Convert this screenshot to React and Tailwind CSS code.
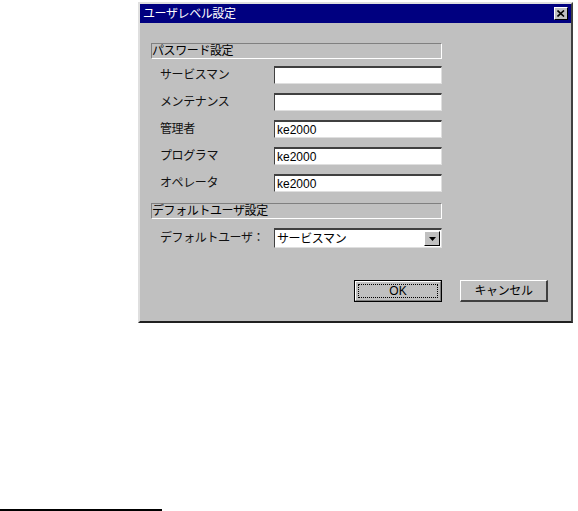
import React from "react";

const FONT = "font-['Liberation_Sans','Noto_Sans_CJK_JP',sans-serif]";

/* ---------- Sunken group header ---------- */
const GroupHeader = ({ children }) => (
  <div
    className="ml-[11px] w-[291px] h-[16px] flex items-center
    border-t border-l border-t-[#808080] border-l-[#808080]
    border-b border-r border-b-white border-r-white
    text-[12px] leading-none text-black tracking-[-0.4px]"
  >
    {children}
  </div>
);

/* ---------- Sunken text field ---------- */
const Field = ({ value = "" }) => (
  <div
    className="w-[168px] h-[18px] bg-white flex items-center
    border-t-2 border-l border-t-[#404040] border-l-[#404040]
    border-b border-r border-b-[#dfdfdf] border-r-[#dfdfdf]
    pl-[2px] text-[12px] leading-none text-black"
  >
    {value}
  </div>
);

const Row = ({ label, value }) => (
  <div className="flex items-center h-[18px]">
    <span className="ml-[20px] w-[114px] text-[12px] leading-none tracking-[-0.4px] text-[#111]">
      {label}
    </span>
    <Field value={value} />
  </div>
);

const App = () => {
  const rows = [
    { label: "サービスマン", value: "" },
    { label: "メンテナンス", value: "" },
    { label: "管理者", value: "ke2000" },
    { label: "プログラマ", value: "ke2000" },
    { label: "オペレータ", value: "ke2000" },
  ];

  return (
    <div className={`w-[578px] h-[511px] bg-white overflow-hidden ${FONT}`}>
      <div className="pt-[2px] pl-[138px]">
        {/* ---------- Dialog frame ---------- */}
        <div
          className="w-[435px] h-[321px] bg-[#c0c0c0]
          border-t-2 border-l-2 border-t-[#dfdfdf] border-l-[#dfdfdf]
          border-b-2 border-r-2 border-b-[#202020] border-r-[#404040]"
        >
          {/* Title bar */}
          <div className="h-[19px] bg-[#000080] flex items-center justify-between pl-[3px] pr-[3px]">
            <span className="text-[12px] leading-none text-white tracking-[-0.4px]">
              ユーザレベル設定
            </span>
            <div
              className="w-[14px] h-[13px] bg-[#c0c0c0] flex items-center justify-center
              border-t border-l border-t-white border-l-white
              border-b border-r border-b-black border-r-black"
            >
              <svg width="8" height="7" viewBox="0 0 8 7">
                <path d="M0.5 0.5 L7 6.5 M7 0.5 L0.5 6.5" stroke="#000" strokeWidth="1.6" />
              </svg>
            </div>
          </div>

          {/* Password group */}
          <div className="mt-[20px]">
            <GroupHeader>パスワード設定</GroupHeader>
          </div>
          <div className="mt-[7px] flex flex-col gap-[9px]">
            {rows.map((r) => (
              <Row key={r.label} label={r.label} value={r.value} />
            ))}
          </div>

          {/* Default user group */}
          <div className="mt-[11px]">
            <GroupHeader>デフォルトユーザ設定</GroupHeader>
          </div>
          <div className="mt-[9px] flex items-center h-[20px]">
            <span className="ml-[20px] w-[114px] text-[12px] leading-none tracking-[-0.4px] text-[#111]">
              デフォルトユーザ：
            </span>
            <div
              className="w-[168px] h-[20px] bg-white flex items-center justify-between
              border-t-2 border-l border-t-[#404040] border-l-[#404040]
              border-b border-r border-b-[#dfdfdf] border-r-[#dfdfdf]
              pl-[2px] pr-[1px] text-[12px] leading-none text-black tracking-[-0.4px]"
            >
              <span>サービスマン</span>
              <div
                className="w-[16px] h-[15px] bg-[#c0c0c0] flex items-center justify-center
                border-t border-l border-t-white border-l-white
                border-b border-r border-b-black border-r-black"
              >
                <svg width="7" height="4" viewBox="0 0 7 4">
                  <path d="M0 0 H7 L3.5 4 Z" fill="#000" />
                </svg>
              </div>
            </div>
          </div>

          {/* Buttons */}
          <div className="mt-[32px] flex gap-[18px] pl-[214px]">
            <div className="w-[88px] h-[22px] border border-black">
              <div
                className="w-full h-full flex items-center justify-center
                border-t border-l border-t-white border-l-white
                border-b border-r border-b-[#808080] border-r-[#808080] p-[2px]"
              >
                <div className="w-full h-full border border-dotted border-black flex items-center justify-center text-[12px] leading-none text-black">
                  OK
                </div>
              </div>
            </div>
            <div
              className="w-[88px] h-[22px] flex items-center justify-center
              border-t border-l border-t-white border-l-white
              border-b-2 border-r-2 border-b-[#404040] border-r-[#404040]
              text-[12px] leading-none text-black tracking-[-0.4px]"
            >
              キャンセル
            </div>
          </div>
        </div>
      </div>

      {/* Footnote rule */}
      <div className="mt-[186px] w-[162px] h-[2px] bg-black" />
    </div>
  );
};

export default App;
